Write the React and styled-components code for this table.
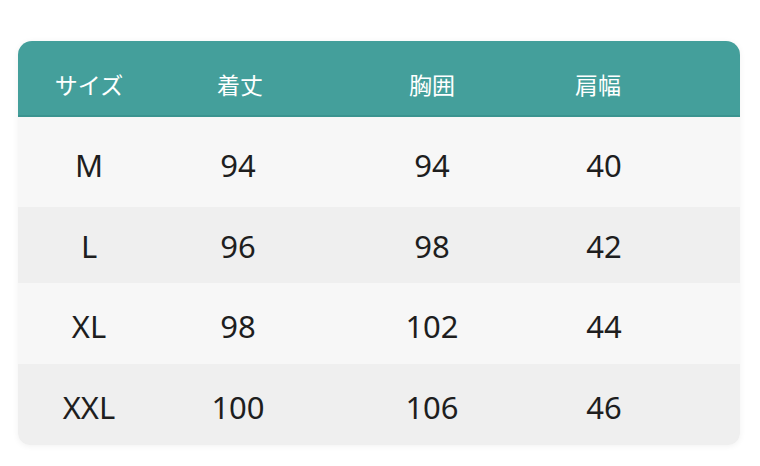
import React from 'react'
import styled, { createGlobalStyle } from 'styled-components'

const GlobalStyle = createGlobalStyle`
  html, body {
    margin: 0;
    padding: 0;
    background: #ffffff;
  }
  body {
    font-family: 'Noto Sans', 'Noto Sans CJK JP', sans-serif;
  }
`

const Page = styled.div`
  width: 760px;
  height: 466px;
  padding: 41px 0 0 18px;
  box-sizing: border-box;
`

const Card = styled.div`
  width: 722px;
  border-radius: 14px 14px 12px 12px;
  overflow: hidden;
  box-shadow: 0 1px 6px rgba(0, 0, 0, 0.06);
`

const Grid = styled.div`
  display: grid;
  grid-template-columns: 142px 156px 232px 112px 1fr;
  align-items: center;
`

const Header = styled(Grid)`
  height: 76px;
  background: #449f9b;
  border-bottom: 2px solid #3b9490;
  box-sizing: border-box;
`

const HeadCell = styled.div`
  text-align: center;
  color: #ffffff;
  font-family: 'Noto Sans CJK JP', sans-serif;
  font-size: 23px;
  line-height: 1;
  padding-top: 12px;
  padding-left: ${p => (p.shift > 0 ? p.shift : 0)}px;
  padding-right: ${p => (p.shift < 0 ? -p.shift : 0)}px;
`

const Row = styled(Grid)`
  height: ${p => p.h}px;
  background: ${p => (p.alt ? '#efefef' : '#f7f7f7')};
`

const Cell = styled.div`
  text-align: center;
  color: #1e1e1e;
  font-family: 'Noto Sans', sans-serif;
  font-size: 31px;
  line-height: 1;
  padding-top: ${p => p.top}px;
`

const heads = [
  { label: 'サイズ', shift: 0 },
  { label: '着丈', shift: 4 },
  { label: '胸囲', shift: 0 },
  { label: '肩幅', shift: -12 },
]

const rows = [
  { h: 90, top: 6, cells: ['M', '94', '94', '40'] },
  { h: 76, top: 2, cells: ['L', '96', '98', '42'] },
  { h: 81, top: 6, cells: ['XL', '98', '102', '44'] },
  { h: 81, top: 6, cells: ['XXL', '100', '106', '46'] },
]

export default function App() {
  return (
    <Page>
      <GlobalStyle />
      <Card>
        <Header>
          {heads.map(h => (
            <HeadCell key={h.label} shift={h.shift}>{h.label}</HeadCell>
          ))}
          <div />
        </Header>
        {rows.map((r, i) => (
          <Row key={r.cells[0]} h={r.h} alt={i % 2 === 1}>
            {r.cells.map((c, j) => (
              <Cell key={j} top={r.top}>{c}</Cell>
            ))}
            <div />
          </Row>
        ))}
      </Card>
    </Page>
  )
}
